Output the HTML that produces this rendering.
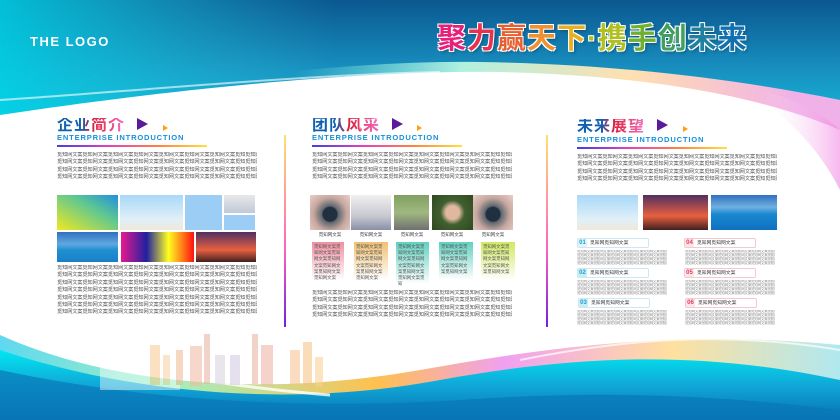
<!DOCTYPE html>
<html><head><meta charset="utf-8"><style>
*{margin:0;padding:0;box-sizing:border-box}
body{width:840px;height:420px;overflow:hidden;position:relative;background:#fff;font-family:"Liberation Sans","Noto Sans CJK SC",sans-serif}
.a{position:absolute}
.t{position:absolute;font-size:5.2px;line-height:7.4px;color:#555;white-space:nowrap;overflow:hidden;letter-spacing:-0.1px}
.h{position:absolute;font-size:16px;font-weight:bold;letter-spacing:1px;line-height:16px;background:linear-gradient(90deg,#1060b0,#1060b0 35%,#e02040 55%,#f070c0);-webkit-background-clip:text;background-clip:text;color:transparent}
.en{position:absolute;font-size:7.6px;font-weight:bold;color:#1890d8;letter-spacing:.8px;line-height:8px}
.ln{position:absolute;height:2px;background:linear-gradient(90deg,#4040e0,#e040c0,#ff8040,#ffe040)}
.tri{position:absolute;width:0;height:0;border-top:6px solid transparent;border-bottom:6px solid transparent;border-left:11px solid #5a1a9a}
.tri2{position:absolute;width:0;height:0;border-top:3px solid transparent;border-bottom:3px solid transparent;border-left:5px solid #ffa010}
.vl{position:absolute;width:2px;background:linear-gradient(#ffe070,#ff60c0 60%,#7020e0)}
.box{position:absolute;font-size:4.4px;line-height:6.2px;color:#555;padding:2px 2px;word-break:break-all}
.lab{position:absolute;font-size:4.5px;color:#444;width:40px;text-align:center}
.nb{position:absolute;height:10px;width:72px;border:1px solid #cce8f0;border-radius:2px;font-size:4.8px;line-height:8px;color:#333}
.nb b{display:inline-block;width:9px;height:8px;text-align:center;font-size:6px;margin-right:3px}
.d{position:absolute;font-size:3.5px;line-height:3.9px;color:#888;white-space:nowrap;overflow:hidden;letter-spacing:-.2px}
</style></head><body>
<svg class="a" style="left:0;top:0" width="840" height="420">
<defs>
<linearGradient id="tp" x1="0" y1="0" x2="0" y2="1"><stop offset="0" stop-color="#0a5890"/><stop offset=".5" stop-color="#1890c0"/><stop offset="1" stop-color="#10c8e0"/></linearGradient>
<linearGradient id="tp2" x1="0" y1="0" x2="1" y2="0"><stop offset="0" stop-color="#00d8e8" stop-opacity=".8"/><stop offset=".4" stop-color="#30c0d8" stop-opacity="0"/></linearGradient>
<linearGradient id="gl" x1="0" y1="0" x2="1" y2="0"><stop offset=".35" stop-color="#80f0e0" stop-opacity=".0"/><stop offset=".55" stop-color="#b0f0e0"/><stop offset=".75" stop-color="#ffe0b0"/><stop offset=".95" stop-color="#f0b0e8"/></linearGradient>
<linearGradient id="bt" x1="0" y1="0" x2="0" y2="1"><stop offset="0" stop-color="#00e8f0"/><stop offset=".5" stop-color="#10a8d8"/><stop offset="1" stop-color="#0870b0"/></linearGradient>
<linearGradient id="bw" x1="0" y1="0" x2="1" y2="0"><stop offset="0" stop-color="#60d8f0"/><stop offset=".2" stop-color="#a0f0c0"/><stop offset=".45" stop-color="#ffc050"/><stop offset=".6" stop-color="#f0a0f0"/><stop offset=".8" stop-color="#ffe0a0"/><stop offset="1" stop-color="#b0e8f0"/></linearGradient>
<linearGradient id="pk" x1="0" y1="0" x2="1" y2="0"><stop offset="0" stop-color="#fff" stop-opacity="0"/><stop offset="1" stop-color="#f080e0" stop-opacity=".8"/></linearGradient>
</defs>
<rect width="840" height="140" fill="url(#tp)"/>
<rect width="840" height="140" fill="url(#tp2)"/>
<path d="M0 110 C180 85 330 60 480 62 C620 64 740 80 840 100 L840 140 L0 140Z" fill="url(#gl)"/>
<path d="M0 115 C200 85 380 70 500 72 C640 75 760 95 840 130 L840 200 L0 200Z" fill="#fff"/>
<path d="M760 90 C800 100 830 120 840 130 L840 190 C820 150 790 120 760 100Z" fill="url(#pk)" opacity=".7"/>
<path d="M0 100 C150 90 300 75 440 72" stroke="#fff" stroke-width="2" fill="none" opacity=".6"/>
<path d="M0 335 C100 380 250 400 420 370 C560 345 680 330 840 345 L840 420 L0 420Z" fill="url(#bw)"/>
<path d="M0 350 C120 390 280 410 440 380 C580 355 700 350 840 380 L840 420 L0 420Z" fill="url(#bt)"/>
<path d="M0 370 C140 400 300 410 460 400 C600 390 720 395 840 410 L840 420 L0 420Z" fill="#0878b8" opacity=".7"/>
<path d="M0 320 C80 360 200 385 330 395" stroke="#fff" stroke-width="3" fill="none" opacity=".8"/>
<path d="M520 360 C620 340 720 330 840 350" stroke="#fff" stroke-width="2" fill="none" opacity=".7"/>
<g opacity=".55">
<rect x="100" y="350" width="80" height="40" fill="#fff" opacity=".8"/>
<rect x="150" y="345" width="10" height="40" fill="#f8c890"/><rect x="163" y="355" width="7" height="30" fill="#f8d0a0"/>
<rect x="176" y="350" width="7" height="35" fill="#f0b890"/><rect x="190" y="346" width="12" height="40" fill="#f0b8a0"/>
<rect x="204" y="334" width="6" height="50" fill="#e8b0a0"/><rect x="215" y="355" width="10" height="30" fill="#d8d0e0"/>
<rect x="230" y="355" width="10" height="30" fill="#d0c8e0"/><rect x="252" y="334" width="6" height="50" fill="#e8b0a0"/>
<rect x="261" y="345" width="12" height="40" fill="#f0b0a0"/><rect x="290" y="350" width="10" height="35" fill="#f8c090"/>
<rect x="303" y="342" width="9" height="45" fill="#f8c080"/><rect x="315" y="357" width="8" height="30" fill="#f8d090"/>
</g>
</svg>

<div class="a" style="left:30px;top:34px;color:#fff;font-size:13px;font-weight:bold;letter-spacing:1.5px">THE LOGO</div>
<div class="a" style="left:437px;top:22px;font-size:29px;font-weight:bold;line-height:34px;white-space:nowrap;letter-spacing:1px;text-shadow:1px 1px 0 #fff,-1px -1px 0 #fff,1px -1px 0 #fff,-1px 1px 0 #fff,2px 2px 3px rgba(0,0,0,.3)"><span style="color:#e8207a">聚</span><span style="color:#e83050">力</span><span style="color:#e86030">赢</span><span style="color:#f09030">天</span><span style="color:#e8b020">下</span><span style="color:#b0c020">·携</span><span style="color:#70b030">手</span><span style="color:#40a060">创</span><span style="color:#2080a0">未</span><span style="color:#1070b0">来</span></div>

<!-- panel 1 -->
<div class="h" style="left:57px;top:118px">企业简介</div>
<div class="tri" style="left:137px;top:118px"></div><div class="tri2" style="left:163px;top:125px"></div>
<div class="en" style="left:57px;top:134px">ENTERPRISE INTRODUCTION</div>
<div class="ln" style="left:57px;top:145px;width:150px"></div>
<div class="t" style="left:57px;top:152px;width:200px">觅知网文案觅知网文案觅知网文案觅知网文案觅知网文案觅知网文案觅知网文案觅知觅知网<br>觅知网文案觅知网文案觅知网文案觅知网文案觅知网文案觅知网文案觅知网文案觅知觅知网<br>觅知网文案觅知网文案觅知网文案觅知网文案觅知网文案觅知网文案觅知网文案觅知觅知网<br>觅知网文案觅知网文案觅知网文案觅知网文案觅知网文案觅知网文案觅知网文案觅知觅知网</div>
<div class="a" style="left:57px;top:195px;width:61px;height:35px;background:linear-gradient(30deg,#f0e820,#60c890 60%,#2090e0)"></div>
<div class="a" style="left:120px;top:195px;width:63px;height:35px;background:linear-gradient(#a8d8f8,#e0f0f8 70%,#f0e8d8)"></div>
<div class="a" style="left:185px;top:195px;width:37px;height:35px;background:#9ccef5"></div>
<div class="a" style="left:224px;top:195px;width:31px;height:18px;background:linear-gradient(#e8e8e8,#c0c8d8)"></div>
<div class="a" style="left:224px;top:215px;width:31px;height:15px;background:#9ccef5"></div>
<div class="a" style="left:57px;top:232px;width:61px;height:30px;background:linear-gradient(#3070c0,#60a8e0 40%,#2090d0 60%,#1880c8)"></div>
<div class="a" style="left:121px;top:232px;width:73px;height:30px;background:linear-gradient(90deg,#e81890,#2020a0 35%,#ffff20 65%,#ff1010)"></div>
<div class="a" style="left:196px;top:232px;width:60px;height:30px;background:linear-gradient(#503060,#e86040 60%,#402020)"></div>
<div class="t" style="left:57px;top:265px;width:200px">觅知网文案觅知网文案觅知网文案觅知网文案觅知网文案觅知网文案觅知网文案觅知觅知网<br>觅知网文案觅知网文案觅知网文案觅知网文案觅知网文案觅知网文案觅知网文案觅知觅知网<br>觅知网文案觅知网文案觅知网文案觅知网文案觅知网文案觅知网文案觅知网文案觅知觅知网<br>觅知网文案觅知网文案觅知网文案觅知网文案觅知网文案觅知网文案觅知网文案觅知觅知网<br>觅知网文案觅知网文案觅知网文案觅知网文案觅知网文案觅知网文案觅知网文案觅知觅知网<br>觅知网文案觅知网文案觅知网文案觅知网文案觅知网文案觅知网文案觅知网文案觅知觅知网<br>觅知网文案觅知网文案觅知网文案觅知网文案觅知网文案觅知网文案觅知网文案觅知觅知网</div>
<div class="vl" style="left:284px;top:135px;height:192px"></div>

<!-- panel 2 -->
<div class="h" style="left:312px;top:118px">团队风采</div>
<div class="tri" style="left:392px;top:118px"></div><div class="tri2" style="left:417px;top:125px"></div>
<div class="en" style="left:312px;top:134px">ENTERPRISE INTRODUCTION</div>
<div class="ln" style="left:312px;top:145px;width:150px"></div>
<div class="t" style="left:312px;top:152px;width:200px">觅知网文案觅知网文案觅知网文案觅知网文案觅知网文案觅知网文案觅知网文案觅知觅知网<br>觅知网文案觅知网文案觅知网文案觅知网文案觅知网文案觅知网文案觅知网文案觅知觅知网<br>觅知网文案觅知网文案觅知网文案觅知网文案觅知网文案觅知网文案觅知网文案觅知觅知网<br>觅知网文案觅知网文案觅知网文案觅知网文案觅知网文案觅知网文案觅知网文案觅知觅知网</div>
<div class="a" style="left:310px;top:195px;width:40px;height:35px;background:radial-gradient(circle at 50% 55%,#203040 25%,#606870 30%,#c8a8a0 60%,#e8d0c8)"></div>
<div class="a" style="left:351px;top:195px;width:40px;height:35px;background:linear-gradient(#f0f0f0,#c8c8d0 60%,#8890a8)"></div>
<div class="a" style="left:394px;top:195px;width:35px;height:35px;background:linear-gradient(#80a060,#a0b880 50%,#707070)"></div>
<div class="a" style="left:432px;top:195px;width:41px;height:35px;background:radial-gradient(circle at 50% 50%,#e0b8a0 25%,#406030 45%,#304820)"></div>
<div class="a" style="left:473px;top:195px;width:40px;height:35px;background:radial-gradient(circle at 50% 55%,#203040 25%,#606870 30%,#c8a8a0 60%,#e8d0c8)"></div>
<div class="lab" style="left:310px;top:232px">觅知网文案</div><div class="lab" style="left:351px;top:232px">觅知网文案</div><div class="lab" style="left:392px;top:232px">觅知网文案</div><div class="lab" style="left:432px;top:232px">觅知网文案</div><div class="lab" style="left:473px;top:232px">觅知网文案</div>
<div class="box" style="left:312px;top:242px;width:32px;height:38px;background:linear-gradient(#f090a0,#fff)">觅知网文案觅知网文案觅知网文案觅知网文案觅知网文案觅知网文案觅知网文案</div>
<div class="box" style="left:354px;top:242px;width:34px;height:38px;background:linear-gradient(#f0c070,#fff)">觅知网文案觅知网文案觅知网文案觅知网文案觅知网文案觅知网文案觅知网文案</div>
<div class="box" style="left:396px;top:242px;width:33px;height:42px;background:linear-gradient(#60d0c0,#fff)">觅知网文案觅知网文案觅知网文案觅知网文案觅知网文案觅知网文案觅知网文案觅知</div>
<div class="box" style="left:439px;top:242px;width:34px;height:38px;background:linear-gradient(#60d0c0,#fff)">觅知网文案觅知网文案觅知网文案觅知网文案觅知网文案觅知网文案</div>
<div class="box" style="left:481px;top:242px;width:34px;height:38px;background:linear-gradient(#d0e860,#fff)">觅知网文案觅知网文案觅知网文案觅知网文案觅知网文案觅知网文案</div>
<div class="t" style="left:312px;top:290px;width:200px">觅知网文案觅知网文案觅知网文案觅知网文案觅知网文案觅知网文案觅知网文案觅知觅知网<br>觅知网文案觅知网文案觅知网文案觅知网文案觅知网文案觅知网文案觅知网文案觅知觅知网<br>觅知网文案觅知网文案觅知网文案觅知网文案觅知网文案觅知网文案觅知网文案觅知觅知网<br>觅知网文案觅知网文案觅知网文案觅知网文案觅知网文案觅知网文案觅知网文案觅知觅知网</div>
<div class="vl" style="left:546px;top:135px;height:192px"></div>

<!-- panel 3 -->
<div class="h" style="left:577px;top:119px">未来展望</div>
<div class="tri" style="left:657px;top:119px"></div><div class="tri2" style="left:683px;top:126px"></div>
<div class="en" style="left:577px;top:136px">ENTERPRISE INTRODUCTION</div>
<div class="ln" style="left:577px;top:147px;width:150px"></div>
<div class="t" style="left:577px;top:154px;width:200px">觅知网文案觅知网文案觅知网文案觅知网文案觅知网文案觅知网文案觅知网文案觅知觅知网<br>觅知网文案觅知网文案觅知网文案觅知网文案觅知网文案觅知网文案觅知网文案觅知觅知网<br>觅知网文案觅知网文案觅知网文案觅知网文案觅知网文案觅知网文案觅知网文案觅知觅知网<br>觅知网文案觅知网文案觅知网文案觅知网文案觅知网文案觅知网文案觅知网文案觅知觅知网</div>
<div class="a" style="left:577px;top:195px;width:61px;height:35px;background:linear-gradient(#a8d8f8,#e0f0f8 70%,#f0e8d8)"></div>
<div class="a" style="left:643px;top:195px;width:65px;height:35px;background:linear-gradient(#503060,#e86040 60%,#402020)"></div>
<div class="a" style="left:711px;top:195px;width:66px;height:35px;background:linear-gradient(#3070c0,#70b0e0 35%,#1888d0 55%,#1070c0)"></div>

<div class="nb" style="left:577px;top:238px"><b style="color:#20a0d0;background:#e0f4fa">01</b>觅知网觅知网文案</div>
<div class="nb" style="left:577px;top:268px"><b style="color:#20a0d0;background:#c8eef4">02</b>觅知网觅知网文案</div>
<div class="nb" style="left:578px;top:298px"><b style="color:#20a0d0;background:#c8eef4">03</b>觅知网觅知网文案</div>
<div class="nb" style="left:684px;top:238px;border-color:#f4c8d0"><b style="color:#e04060;background:#fce4e8">04</b>觅知网觅知网文案</div>
<div class="nb" style="left:684px;top:268px;border-color:#f4c8d0"><b style="color:#e04060;background:#fce4e8">05</b>觅知网觅知网文案</div>
<div class="nb" style="left:685px;top:298px;border-color:#f4c8d0"><b style="color:#e04060;background:#fce4e8">06</b>觅知网觅知网文案</div>
<div class="d" style="left:577px;top:250px;width:90px">觅知网文案觅知网文案觅知网文案觅知网文案觅知网文案觅知网文案<br>觅知网文案觅知网文案觅知网文案觅知网文案觅知网文案觅知网文案<br>觅知网文案觅知网文案觅知网文案觅知网文案觅知网文案觅知网文案<br>觅知网文案觅知网文案觅知网文案觅知网文案觅知网文案觅知网文案</div>
<div class="d" style="left:577px;top:280px;width:90px">觅知网文案觅知网文案觅知网文案觅知网文案觅知网文案觅知网文案<br>觅知网文案觅知网文案觅知网文案觅知网文案觅知网文案觅知网文案<br>觅知网文案觅知网文案觅知网文案觅知网文案觅知网文案觅知网文案<br>觅知网文案觅知网文案觅知网文案觅知网文案觅知网文案觅知网文案</div>
<div class="d" style="left:577px;top:310px;width:90px">觅知网文案觅知网文案觅知网文案觅知网文案觅知网文案觅知网文案<br>觅知网文案觅知网文案觅知网文案觅知网文案觅知网文案觅知网文案<br>觅知网文案觅知网文案觅知网文案觅知网文案觅知网文案觅知网文案<br>觅知网文案觅知网文案觅知网文案觅知网文案觅知网文案觅知网文案</div>
<div class="d" style="left:685px;top:250px;width:90px">觅知网文案觅知网文案觅知网文案觅知网文案觅知网文案觅知网文案<br>觅知网文案觅知网文案觅知网文案觅知网文案觅知网文案觅知网文案<br>觅知网文案觅知网文案觅知网文案觅知网文案觅知网文案觅知网文案<br>觅知网文案觅知网文案觅知网文案觅知网文案觅知网文案觅知网文案</div>
<div class="d" style="left:685px;top:280px;width:90px">觅知网文案觅知网文案觅知网文案觅知网文案觅知网文案觅知网文案<br>觅知网文案觅知网文案觅知网文案觅知网文案觅知网文案觅知网文案<br>觅知网文案觅知网文案觅知网文案觅知网文案觅知网文案觅知网文案<br>觅知网文案觅知网文案觅知网文案觅知网文案觅知网文案觅知网文案</div>
<div class="d" style="left:685px;top:310px;width:90px">觅知网文案觅知网文案觅知网文案觅知网文案觅知网文案觅知网文案<br>觅知网文案觅知网文案觅知网文案觅知网文案觅知网文案觅知网文案<br>觅知网文案觅知网文案觅知网文案觅知网文案觅知网文案觅知网文案<br>觅知网文案觅知网文案觅知网文案觅知网文案觅知网文案觅知网文案</div>
</body></html>
